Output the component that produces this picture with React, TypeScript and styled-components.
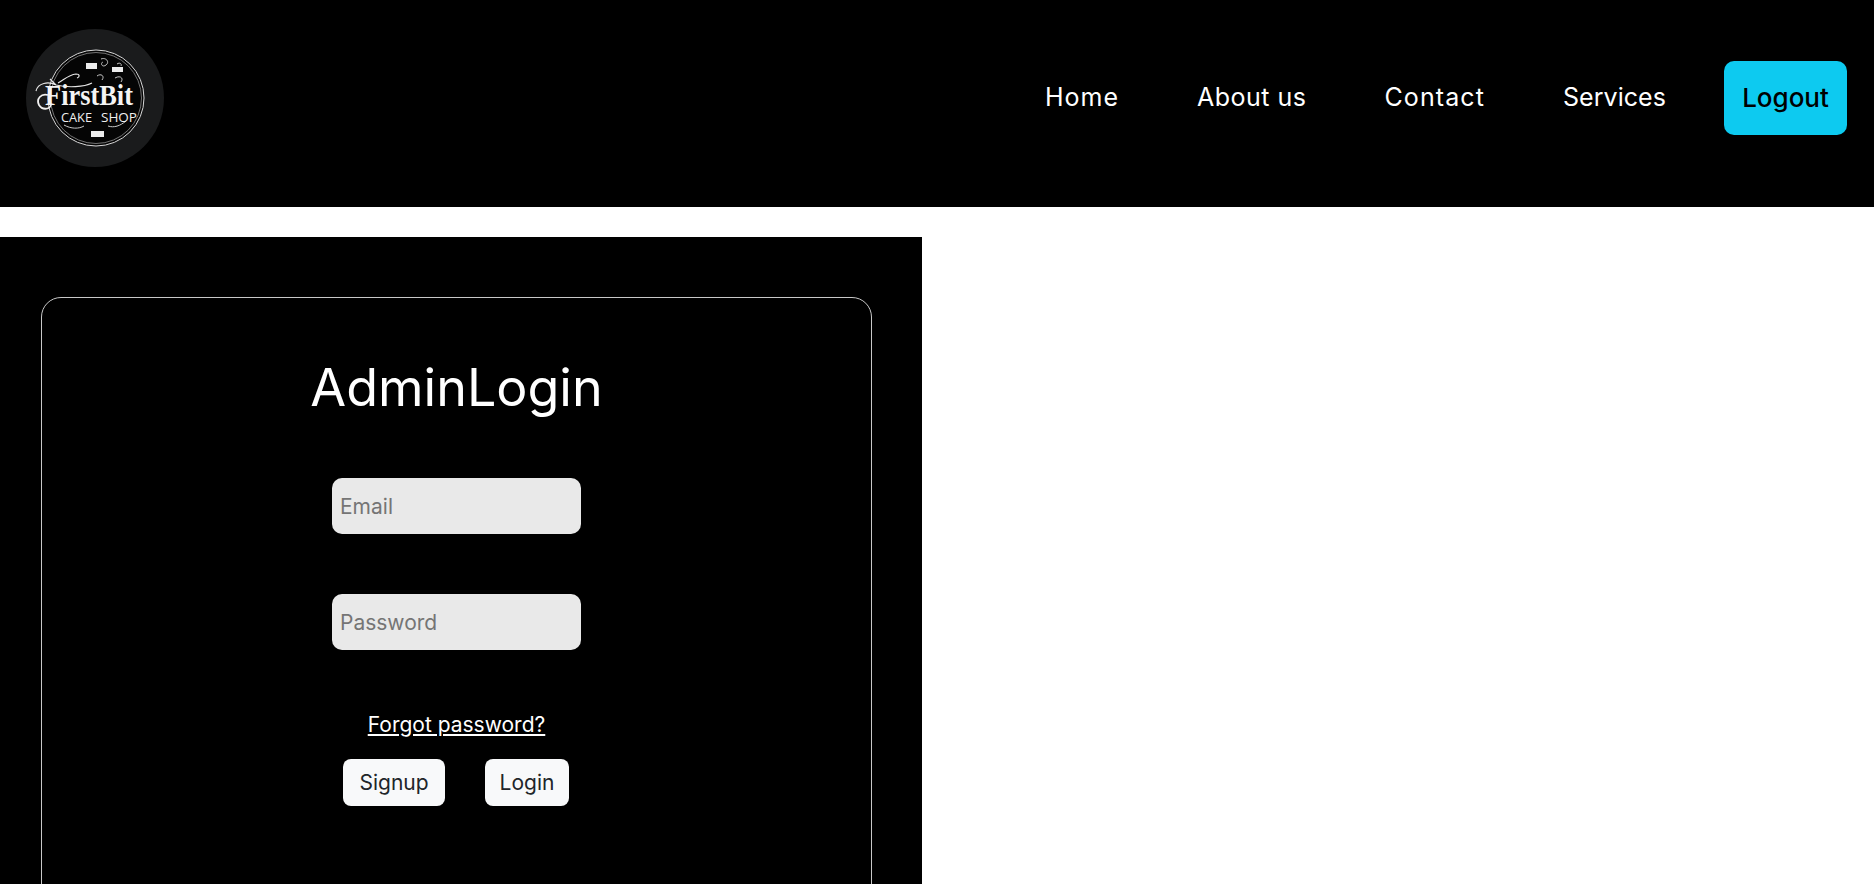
import React from 'react';
import styled, { createGlobalStyle } from 'styled-components';

const GlobalStyle = createGlobalStyle`
  html, body {
    margin: 0;
    padding: 0;
    background: #fff;
    overflow: hidden;
    font-family: Inter, "Open Sans", sans-serif;
  }
`

const StyledHeader = styled.header`
  height: 207px;
  background: #000;
  display: flex;
  align-items: center;
  justify-content: space-between;
  padding: 0 27px 0 26px;
  box-sizing: border-box;
`

const StyledLogo = styled.svg`
  width: 138px;
  height: 138px;
  margin-top: -11px;
  display: block;
`

const StyledNav = styled.nav`
  display: flex;
  align-items: center;
  margin-top: -11px;
`

const StyledNavLink = styled.a<{ $spacing: number }>`
  color: #fff;
  font-size: 25px;
  line-height: 36px;
  padding-bottom: 2px;
  margin-right: 78px;
  letter-spacing: ${p => p.$spacing}px;

  &:last-of-type {
    margin-right: 58px;
  }
`

const StyledLogout = styled.button`
  width: 123px;
  height: 74px;
  border: 0;
  padding: 0 0 2px;
  border-radius: 10px;
  background: #0dcaf0;
  color: #000;
  font-family: inherit;
  font-size: 26px;
  font-weight: 500;
`

const StyledPanel = styled.section`
  width: 922px;
  height: 760px;
  margin-top: 30px;
  padding: 60px 0 0 41px;
  box-sizing: border-box;
  background: #000;
`

const StyledCard = styled.form`
  width: 831px;
  height: 660px;
  box-sizing: border-box;
  border: 1px solid #c8c8c8;
  border-radius: 20px;
  display: flex;
  flex-direction: column;
  align-items: center;
  padding-top: 54px;
`

const StyledTitle = styled.h1`
  margin: 0 0 54px;
  color: #fff;
  font-size: 52px;
  line-height: 72px;
  font-weight: 400;
`

const StyledInput = styled.input`
  width: 249px;
  height: 56px;
  box-sizing: border-box;
  border: 0;
  border-radius: 10px;
  background: #e9e9e9;
  padding: 0 8px;
  margin-bottom: 60px;
  font-family: inherit;
  font-size: 21px;
  outline: none;

  &::placeholder {
    color: #757575;
    opacity: 1;
  }
`

const StyledForgot = styled.a`
  color: #fff;
  font-size: 21px;
  line-height: 28px;
  text-decoration: underline;
  margin-top: 1px;
`

const StyledActions = styled.div`
  display: flex;
  gap: 40px;
  margin: 20px 1px 0 0;
`

const StyledButton = styled.button<{ $width: number }>`
  width: ${p => p.$width}px;
  height: 47px;
  border: 0;
  padding: 0;
  border-radius: 8px;
  background: #f8f9fa;
  color: #212529;
  font-family: inherit;
  font-size: 21px;
`

const Logo = () => (
  <StyledLogo viewBox="0 0 138 138">
    <circle cx="69" cy="69" r="69" fill="#1a1b1c" />
    <circle cx="70" cy="69" r="48" fill="#050505" stroke="#d8d8d8" strokeWidth="1" />
    <circle cx="70" cy="69" r="45.5" fill="none" stroke="#8f8f8f" strokeWidth="0.8" />
    <path d="M10 62c2-8 12-10 20-6 12 3 28 2 36-2M32 54c6-3 10-8 18-9 4 0 4 3 1 4M24 50l6 6" fill="none" stroke="#e4e4e4" strokeWidth="1.2" />
    <path d="M22 66c-7-2-12 4-9 10 3 5 10 5 12 0" fill="none" stroke="#f0f0f0" strokeWidth="1.8" />
    <path d="M60 34h11v6H60zM86 38h11v5H86zM65 102h13v6H65z" fill="#ececec" />
    <path d="M75 30c5-2 9 3 5 6s-6-2-3-3M89 49c5-3 9 0 6 4M71 47c4-3 8 0 5 4M58 97c-5 3-13 3-20-1M82 97c6 2 12 0 18-5M91 35c3-2 5 0 4 2" fill="none" stroke="#c8c8c8" strokeWidth="1" />
    <text x="19" y="76" textLength="88" lengthAdjust="spacingAndGlyphs" fontFamily="'Liberation Serif', serif" fontWeight="700" fontSize="30" fill="#f4f4f4">FirstBit</text>
    <text x="35" y="93" textLength="31" lengthAdjust="spacingAndGlyphs" fontFamily="'Open Sans', sans-serif" fontSize="13" fill="#eee">CAKE</text>
    <text x="75" y="93" textLength="36" lengthAdjust="spacingAndGlyphs" fontFamily="'Open Sans', sans-serif" fontSize="13" fill="#eee">SHOP</text>
  </StyledLogo>
)

export default function App() {
  return (
    <>
      <GlobalStyle />
      <StyledHeader>
        <Logo />
        <StyledNav>
          <StyledNavLink $spacing={1}>Home</StyledNavLink>
          <StyledNavLink $spacing={0.5}>About us</StyledNavLink>
          <StyledNavLink $spacing={1.1}>Contact</StyledNavLink>
          <StyledNavLink $spacing={0.05}>Services</StyledNavLink>
          <StyledLogout type="button">Logout</StyledLogout>
        </StyledNav>
      </StyledHeader>
      <StyledPanel>
        <StyledCard>
          <StyledTitle>AdminLogin</StyledTitle>
          <StyledInput placeholder="Email" />
          <StyledInput placeholder="Password" type="password" />
          <StyledForgot>Forgot password?</StyledForgot>
          <StyledActions>
            <StyledButton type="button" $width={102}>Signup</StyledButton>
            <StyledButton type="button" $width={84}>Login</StyledButton>
          </StyledActions>
        </StyledCard>
      </StyledPanel>
    </>
  )
}
